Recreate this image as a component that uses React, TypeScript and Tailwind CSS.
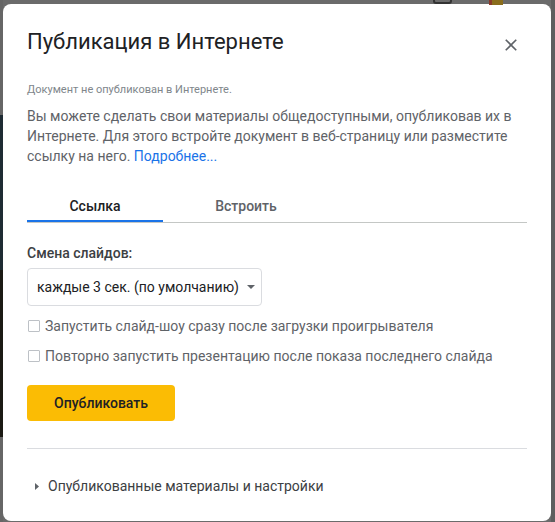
import React, { useState } from 'react';

const font = { fontFamily: 'Roboto, "Noto Sans", Arial, sans-serif' };

function Checkbox({ label }: { label: string }) {
  const [checked, setChecked] = useState(false);
  return (
    <label className="flex items-center h-[20px] cursor-pointer">
      <span
        onClick={() => setChecked(!checked)}
        className={`ml-[1px] w-[12px] h-[12px] border border-[#bdc1c6] rounded-[1px] shrink-0 ${checked ? 'bg-[#1a73e8] border-[#1a73e8]' : 'bg-white'}`}
      />
      <span className="ml-[5px] text-[14px] leading-[20px] text-[#5f6368]">{label}</span>
    </label>
  );
}

export default function App() {
  const [tab, setTab] = useState(0);

  return (
    <div className="relative w-[555px] h-[522px] bg-[#6b6b6b] overflow-hidden flex" style={font}>
      {/* dimmed page behind the dialog */}
      <div className="absolute left-[433px] top-[-6px] w-[19px] h-[10px] rounded-[3px] border-2 border-[#333]" />
      <div className="absolute left-[489px] top-0 w-[14px] h-[5px] bg-[#8a6d1c]" />
      <div className="absolute left-[489px] top-0 w-[3px] h-[5px] bg-[#8a3a2a]" />

      <div className="w-[3px] flex flex-col shrink-0">
        <div className="h-[115px] bg-[#666]" />
        <div className="h-[155px] bg-[#1e2b33]" />
        <div className="h-[167px] bg-[#1b1a14]" />
        <div className="flex-1 bg-[#666]" />
      </div>

      <div className="mt-[4px] w-[548px] h-[517px] bg-white rounded-[8px] px-[24px] pt-[24px] flex flex-col shrink-0">
        <div className="flex items-start justify-between">
          <h1 className="text-[22px] leading-[28px] text-[#202124] font-normal">Публикация в Интернете</h1>
          <button className="mt-[7px] mr-[6px] text-[#5f6368]">
            <svg width="20" height="20" viewBox="0 0 24 24" fill="currentColor">
              <path d="M19 6.41L17.59 5 12 10.59 6.41 5 5 6.41 10.59 12 5 17.59 6.41 19 12 13.41 17.59 19 19 17.59 13.41 12z" />
            </svg>
          </button>
        </div>

        <p className="mt-[26px] text-[11px] leading-[16px] text-[#80868b]">Документ не опубликован в Интернете.</p>

        <p className="mt-[8px] text-[14px] leading-[20px] text-[#5f6368]">
          Вы можете сделать свои материалы общедоступными, опубликовав их в Интернете. Для этого встройте документ в
          веб-страницу или разместите ссылку на него. <span className="text-[#1a73e8]">Подробнее...</span>
        </p>

        <div className="mt-[26px]">
          <div className="flex h-[30px]">
            {['Ссылка', 'Встроить'].map((t, i) => (
              <button
                key={t}
                onClick={() => setTab(i)}
                className={`flex flex-col ${i === 0 ? 'w-[136px]' : 'w-[166px]'}`}
              >
                <span
                  className={`flex-1 flex items-center justify-center text-[14px] font-medium ${tab === i ? 'text-[#202124]' : 'text-[#5f6368]'}`}
                >
                  {t}
                </span>
                <span className={`h-[2px] w-full ${tab === i ? 'bg-[#1a73e8]' : ''}`} />
              </button>
            ))}
          </div>
          <div className="h-px bg-[#c4c7c5]" />
        </div>

        <div className="mt-[20px] text-[14px] leading-[20px] font-medium text-[#3c4043]">Смена слайдов:</div>

        <div className="mt-[5px] w-[235px] h-[38px] border border-[#dadce0] rounded-[4px] flex items-center pl-[9px]">
          <span className="text-[14px] text-[#202124]">каждые 3 сек. (по умолчанию)</span>
          <svg className="ml-[8px]" width="8" height="4" viewBox="0 0 8 4">
            <path d="M0 0h8L4 4z" fill="#5f6368" />
          </svg>
        </div>

        <div className="mt-[10px] flex flex-col gap-[10px]">
          <Checkbox label="Запустить слайд-шоу сразу после загрузки проигрывателя" />
          <Checkbox label="Повторно запустить презентацию после показа последнего слайда" />
        </div>

        <button className="mt-[19px] w-[148px] h-[36px] rounded-[4px] bg-[#fbbc04] text-[14px] font-medium text-[#202124]">
          Опубликовать
        </button>

        <div className="mt-[27px] h-px bg-[#dadce0]" />

        <div className="mt-[27px] flex items-center h-[20px]">
          <svg className="ml-[8px]" width="4" height="7" viewBox="0 0 4 7">
            <path d="M0 0l4 3.5L0 7z" fill="#5f6368" />
          </svg>
          <span className="ml-[9px] text-[14px] text-[#3c4043]">Опубликованные материалы и настройки</span>
        </div>
      </div>

      <div className="flex-1 bg-[#5e5e5e]" />
    </div>
  );
}
